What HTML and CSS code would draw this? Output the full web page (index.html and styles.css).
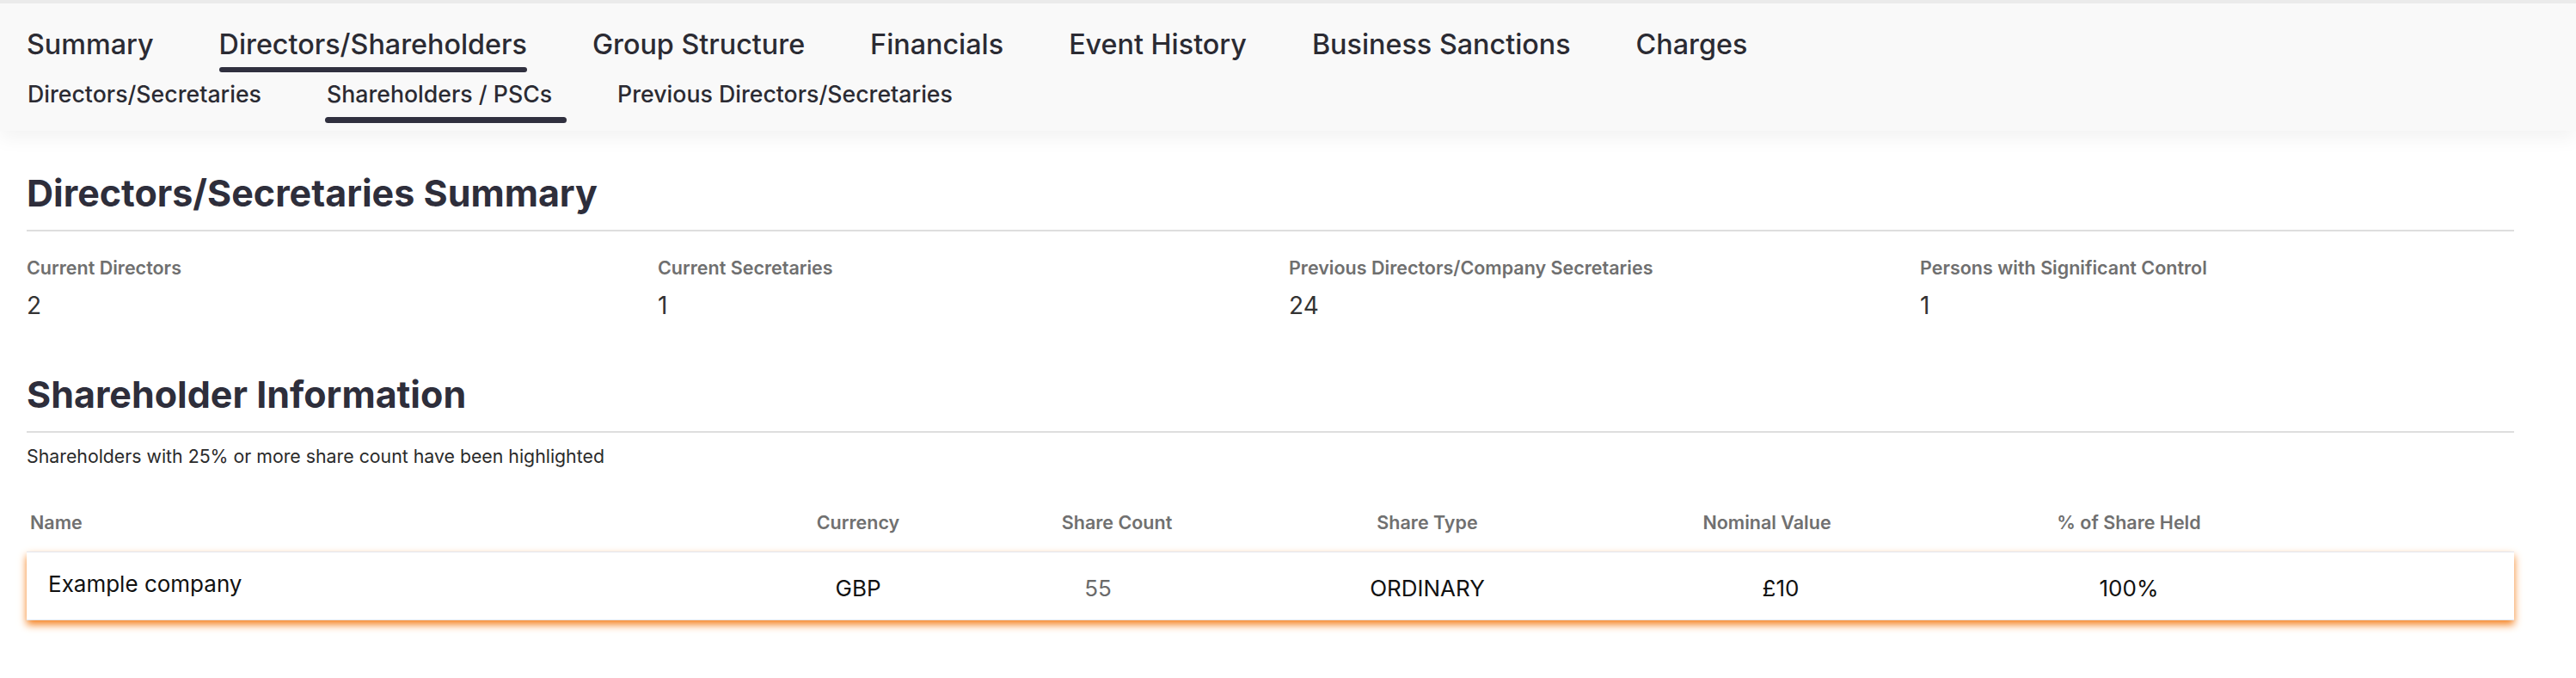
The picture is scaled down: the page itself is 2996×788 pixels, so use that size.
FILE: index.html
```html
<!DOCTYPE html>
<html lang="en">
<head>
<meta charset="utf-8">
<title>Directors/Shareholders</title>
<link rel="stylesheet" href="styles.css">
</head>
<body>
<nav class="nav">
  <div class="main-tabs">
    <span class="tab">Summary</span>
    <span class="tab active">Directors/Shareholders</span>
    <span class="tab">Group Structure</span>
    <span class="tab">Financials</span>
    <span class="tab">Event History</span>
    <span class="tab">Business Sanctions</span>
    <span class="tab">Charges</span>
  </div>
  <div class="sub-tabs">
    <span class="subtab">Directors/Secretaries</span>
    <span class="subtab active">Shareholders / PSCs</span>
    <span class="subtab">Previous Directors/Secretaries</span>
  </div>
</nav>
<main class="content">
  <h1 class="section-title first">Directors/Secretaries Summary</h1>
  <div class="stats">
    <div class="stat">
      <div class="stat-label">Current Directors</div>
      <div class="stat-value">2</div>
    </div>
    <div class="stat">
      <div class="stat-label">Current Secretaries</div>
      <div class="stat-value">1</div>
    </div>
    <div class="stat">
      <div class="stat-label">Previous Directors/Company Secretaries</div>
      <div class="stat-value">24</div>
    </div>
    <div class="stat">
      <div class="stat-label">Persons with Significant Control</div>
      <div class="stat-value">1</div>
    </div>
  </div>
  <h2 class="section-title">Shareholder Information</h2>
  <p class="note">Shareholders with 25% or more share count have been highlighted</p>
  <div class="table">
    <div class="thead">
      <div class="th name">Name</div>
      <div class="th">Currency</div>
      <div class="th">Share Count</div>
      <div class="th">Share Type</div>
      <div class="th">Nominal Value</div>
      <div class="th">% of Share Held</div>
      <div class="th"></div>
    </div>
    <div class="trow highlighted">
      <div class="td name">Example company</div>
      <div class="td">GBP</div>
      <div class="td count">55</div>
      <div class="td">ORDINARY</div>
      <div class="td nominal">£10</div>
      <div class="td">100%</div>
      <div class="td"></div>
    </div>
  </div>
</main>
</body>
</html>
```
FILE: styles.css
```css
* { box-sizing: border-box; }

html, body {
  margin: 0;
  padding: 0;
  background: #ffffff;
}

body {
  font-family: Inter, "Noto Sans", "Liberation Sans", sans-serif;
  color: #2d2d38;
}

/* ---------- navigation ---------- */
.nav {
  background: #f9f9f9;
  border-top: 4px solid #ebebeb;
  padding: 0 31px 9px 31px;
  box-shadow: 0 8px 22px rgba(0, 0, 0, 0.055);
}

.main-tabs {
  display: flex;
  align-items: flex-start;
  gap: 76px;
  padding-top: 28px;
}

.tab {
  display: flex;
  flex-direction: column;
  font-size: 32.3px;
  line-height: 39px;
  font-weight: 500;
  color: #2b2b33;
  white-space: nowrap;
}

.tab.active::after {
  content: "";
  height: 6px;
  margin-top: 7px;
  border-radius: 3px;
  background: #30303f;
}

.sub-tabs {
  display: flex;
  align-items: flex-start;
  gap: 76px;
  margin-top: 10px;
  padding-left: 1px;
}

.subtab {
  display: flex;
  flex-direction: column;
  font-size: 26.7px;
  line-height: 31px;
  font-weight: 500;
  color: #2b2b33;
  white-space: nowrap;
}

.subtab.active::after {
  content: "";
  height: 7px;
  width: calc(100% + 19px);
  margin-top: 11px;
  margin-left: -2px;
  border-radius: 4px;
  background: #30303f;
}

/* ---------- content ---------- */
.content {
  padding: 0 72px 40px 31px;
}

.section-title {
  margin: 0;
  font-size: 43px;
  line-height: 48px;
  font-weight: 700;
  color: #2e2e3b;
  padding-bottom: 19px;
  border-bottom: 2px solid #dedede;
}

.section-title.first {
  margin-top: 48px;
}

.stats {
  display: grid;
  grid-template-columns: repeat(4, 1fr);
  column-gap: 43px;
  margin-top: 29px;
}

.stat-label {
  font-size: 21.5px;
  line-height: 26px;
  font-weight: 600;
  color: #6f6f6f;
}

.stat-value {
  margin-top: 14px;
  font-size: 28px;
  line-height: 34px;
  font-weight: 400;
  color: #333333;
}

.stats + .section-title {
  margin-top: 62px;
}

.note {
  margin: 14px 0 0 0;
  font-size: 21.3px;
  line-height: 26px;
  color: #2a2a2a;
}

/* ---------- table ---------- */
.table {
  margin-top: 51px;
}

.thead,
.trow {
  display: grid;
  grid-template-columns: 849px 236px 366px 356px 434px 408px 1fr;
  align-items: center;
}

.th {
  font-size: 21.5px;
  line-height: 26px;
  font-weight: 600;
  color: #707070;
  text-align: center;
  white-space: nowrap;
}

.th.name {
  text-align: left;
  padding-left: 4px;
}

.trow {
  margin-top: 21px;
  height: 80px;
  background: #ffffff;
  border-top: 1px solid #e2e5ee;
  border-bottom: 1px solid #e2e5ee;
  box-shadow: 0 5px 9px rgba(245, 130, 32, 1);
}

.td {
  font-size: 26px;
  line-height: 32px;
  font-weight: 400;
  color: #111111;
  text-align: center;
  white-space: nowrap;
  padding-top: 6px;
}

.td.name {
  text-align: left;
  padding-left: 25px;
  padding-top: 0;
  padding-bottom: 4px;
}

.td.count {
  color: #6a6a6a;
  padding-right: 44px;
}

.td.nominal {
  padding-left: 32px;
}
```
